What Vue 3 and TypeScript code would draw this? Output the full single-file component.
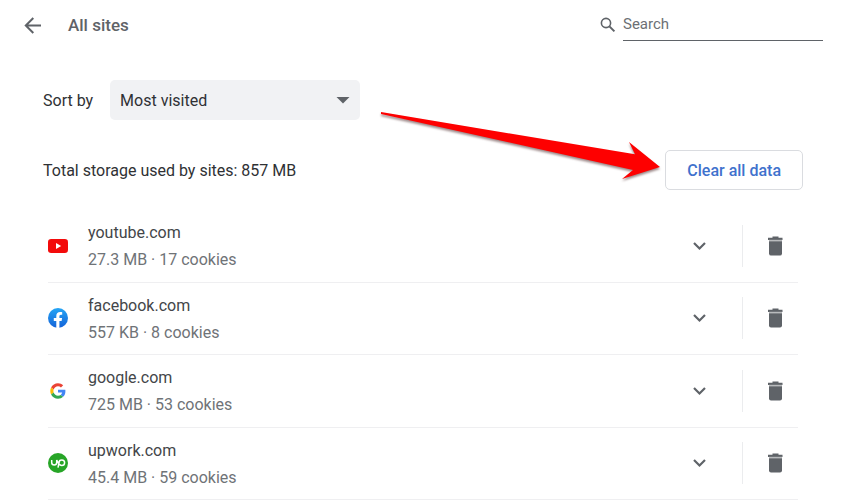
<script setup lang="ts">
import { ref } from 'vue'

interface Site {
  name: string
  usage: string
  icon: 'youtube' | 'facebook' | 'google' | 'upwork'
}

const sortBy = ref('visited')
const query = ref('')

const sites: Site[] = [
  { name: 'youtube.com', usage: '27.3 MB · 17 cookies', icon: 'youtube' },
  { name: 'facebook.com', usage: '557 KB · 8 cookies', icon: 'facebook' },
  { name: 'google.com', usage: '725 MB · 53 cookies', icon: 'google' },
  { name: 'upwork.com', usage: '45.4 MB · 59 cookies', icon: 'upwork' },
]
</script>

<template>
  <div class="page">
    <header class="header">
      <button class="icon-button" type="button" aria-label="Back">
        <svg width="24" height="24" viewBox="0 0 24 24" fill="none" stroke="#5f6368" stroke-width="2">
          <path d="M21 12.500H6M13.300 5l-7.500 7.500 7.500 7.500" />
        </svg>
      </button>
      <h1 class="title">All sites</h1>
      <div class="search">
        <label class="search-icon" for="search" aria-label="Search sites">
          <svg width="16" height="16" viewBox="0 0 16 16" fill="none" stroke="#5f6368">
            <circle cx="6" cy="6" r="4.600" stroke-width="1.600" />
            <path d="M9.400 9.400l5 5" stroke-width="2" />
          </svg>
        </label>
        <input id="search" v-model="query" class="search-input" type="text" placeholder="Search" />
      </div>
    </header>

    <main class="content">
      <div class="sort">
        <label class="sort-label" for="sort">Sort by</label>
        <div class="select-box">
          <select id="sort" v-model="sortBy" class="select">
            <option value="visited">Most visited</option>
          </select>
          <svg class="caret" width="14" height="7" viewBox="0 0 14 7"><path d="M0.500 0h13L7 6.500z" fill="#5f6368" /></svg>
        </div>
      </div>

      <div class="summary">
        <span class="total">Total storage used by sites: 857 MB</span>
        <div class="clear-box">
          <button class="clear" type="button">Clear all data</button>
          <svg class="pointer" width="290" height="80" viewBox="0 0 290 80" aria-hidden="true">
            <path d="M6 4L260 46.300 254 34 285 59 247 71 258 62 6 6z" fill="#fe0000" />
          </svg>
        </div>
      </div>

      <ul class="sites">
        <li v-for="site in sites" :key="site.name" class="site">
          <svg v-if="site.icon === 'youtube'" class="logo" width="20" height="20" viewBox="0 0 20 20">
            <rect y="3" width="20" height="14" rx="3.200" fill="#f30b0b" />
            <path d="M8 7l5.200 3L8 13z" fill="#fff" />
          </svg>
          <svg v-else-if="site.icon === 'facebook'" class="logo" width="20" height="20" viewBox="0 0 20 20">
            <defs>
              <linearGradient id="fb" x1="0" y1="0" x2="0" y2="1">
                <stop offset="0" stop-color="#24a5f5" />
                <stop offset="1" stop-color="#1462d8" />
              </linearGradient>
            </defs>
            <circle cx="10" cy="10" r="10" fill="url(#fb)" />
            <path d="M8.300 20v-7H5.800v-2.900h2.500V8c0-2.500 1.500-3.900 3.800-3.900 1 0 2.100.2 2.100.2v2.400H13c-1.200 0-1.600.8-1.600 1.500v1.900h2.700l-.5 2.900h-2.200V20a10 10 0 0 1-3.100 0z" fill="#fff" />
          </svg>
          <svg v-else-if="site.icon === 'google'" class="logo" width="20" height="20" viewBox="-7 -7 62 62">
            <path fill="#EA4335" d="M24 9.5c3.54 0 6.71 1.22 9.21 3.6l6.85-6.85C35.9 2.38 30.47 0 24 0 14.62 0 6.51 5.38 2.56 13.22l7.98 6.19C12.43 13.72 17.74 9.5 24 9.5z" />
            <path fill="#4285F4" d="M46.98 24.55c0-1.57-.15-3.09-.38-4.55H24v9.02h12.94c-.58 2.96-2.26 5.48-4.78 7.18l7.73 6c4.51-4.18 7.09-10.36 7.09-17.65z" />
            <path fill="#FBBC05" d="M10.53 28.59c-.48-1.45-.76-2.99-.76-4.59s.27-3.14.76-4.59l-7.98-6.19C.92 16.46 0 20.12 0 24s.92 7.54 2.56 10.78l7.97-6.19z" />
            <path fill="#34A853" d="M24 48c6.48 0 11.93-2.13 15.89-5.81l-7.73-6c-2.15 1.45-4.92 2.3-8.16 2.3-6.26 0-11.57-4.22-13.47-9.91l-7.98 6.19C6.51 42.62 14.62 48 24 48z" />
          </svg>
          <svg v-else class="logo" width="20" height="20" viewBox="0 0 20 20" fill="none">
            <circle cx="10" cy="10" r="10" fill="#27a527" />
            <path d="M3.700 7v2.600a2.500 2.500 0 0 0 5 0V7c.8 2 1.800 3.600 3 4.600M10 14.600l1-5a2.800 2.800 0 1 1 2.800 2.900c-.8 0-1.500-.4-2.100-.9" stroke="#fff" stroke-width="1.500" />
          </svg>

          <div class="details">
            <span class="name">{{ site.name }}</span>
            <span class="usage">{{ site.usage }}</span>
          </div>

          <button class="icon-button" type="button" :aria-label="`Show details for ${site.name}`">
            <svg width="14" height="10" viewBox="0 0 14 10" fill="none" stroke="#5f6368" stroke-width="2.200">
              <path d="M2 2l5.500 5.500L13 2" />
            </svg>
          </button>
          <span class="separator"></span>
          <button class="icon-button remove" type="button" :aria-label="`Delete data for ${site.name}`">
            <svg width="16" height="20" viewBox="0 0 16 20">
              <path d="M5.500 .5h6v1.200h4V4H1V1.700h4.500z" fill="#5f6368" />
              <path d="M2 3.800h13v1.500H2z" fill="#b9bbbd" />
              <path d="M2 5.200h13V17.500a2 2 0 0 1-2 2H4a2 2 0 0 1-2-2z" fill="#5f6368" />
            </svg>
          </button>
        </li>
      </ul>
    </main>
  </div>
</template>

<style>
body {
  margin: 0;
  background: #fff;
}
</style>

<style scoped>
.page {
  box-sizing: border-box;
  display: flex;
  flex-direction: column;
  min-height: 100vh;
  padding-bottom: 4px;
  font: 16px/24px Roboto, "Liberation Sans", sans-serif;
  color: #2f3134;
}

button,
input,
select {
  box-sizing: border-box;
  margin: 0;
  padding: 0;
  border: 0;
  background: none;
  font: inherit;
  color: inherit;
}

button {
  cursor: pointer;
}

.icon-button {
  display: flex;
  flex: none;
  align-items: center;
  justify-content: center;
  width: 24px;
  height: 24px;
}

.header {
  display: flex;
  align-items: center;
  height: 50px;
  padding: 0 21px 0 20px;
}

.title {
  flex: 1;
  margin: 0 0 0 24px;
  font-size: 17px;
  font-weight: 500;
  color: #5f6368;
}

.search {
  display: flex;
  align-self: flex-start;
  align-items: center;
  gap: 7px;
  padding-top: 8px;
}

.search-icon {
  display: flex;
}

.search-input {
  width: 200px;
  height: 33px;
  border-bottom: 1px solid #5f6368;
  border-radius: 0;
  outline: 0;
  font-size: 15px;
}

.search-input::placeholder {
  color: #6c7074;
  opacity: 1;
}

.content {
  display: flex;
  flex: 1;
  flex-direction: column;
  padding: 30px 41px 0 43px;
}

.sort {
  display: flex;
  align-items: center;
  gap: 17px;
}

.sort-label,
.total,
.details {
  padding-top: 2px;
}

.select-box {
  position: relative;
  width: 250px;
}

.select {
  display: block;
  width: 100%;
  height: 40px;
  padding: 2px 32px 0 10px;
  border-radius: 5px;
  background: #f1f2f4;
  appearance: none;
}

.caret {
  position: absolute;
  top: 17px;
  right: 10px;
  pointer-events: none;
}

.summary {
  display: flex;
  align-items: center;
  justify-content: space-between;
  margin: 30px 0 20px;
}

.clear-box {
  position: relative;
}

.clear {
  display: block;
  height: 40px;
  padding: 2px 21px 0;
  border: 1px solid #dadce0;
  border-radius: 5px;
  font-weight: 500;
  color: #3f72cd;
}

.pointer {
  position: absolute;
  top: -42px;
  right: 100%;
  filter: drop-shadow(0 2px 1px rgba(60, 20, 20, 0.5));
  pointer-events: none;
}

.sites {
  display: grid;
  flex: 1;
  grid-auto-rows: 1fr;
  margin: 0 5px;
  padding: 0;
  list-style: none;
}

.site {
  display: flex;
  align-items: center;
  border-bottom: 1px solid #efeff1;
}

.logo {
  flex: none;
}

.details {
  display: flex;
  flex: 1;
  flex-direction: column;
  gap: 3px;
  padding-left: 20px;
}

.name {
  color: #434649;
}

.usage {
  color: #6f7377;
}

.separator {
  width: 1px;
  height: 42px;
  margin: 0 20px 0 31px;
  background: #ebecee;
}

.remove {
  margin-right: 11px;
}
</style>
